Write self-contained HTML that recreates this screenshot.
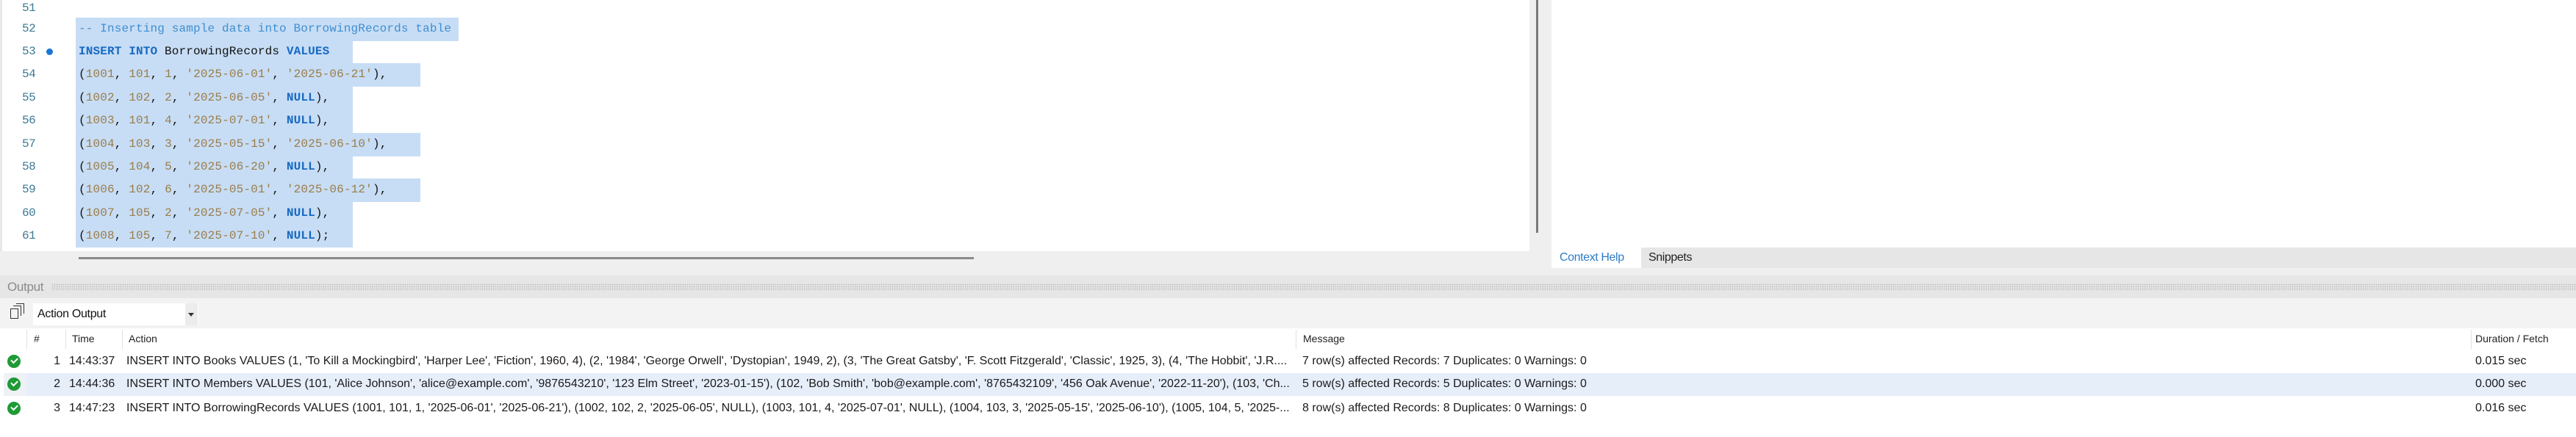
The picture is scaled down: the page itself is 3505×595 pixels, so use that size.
<!DOCTYPE html>
<html><head><meta charset="utf-8"><style>
*{margin:0;padding:0;box-sizing:border-box}
body{width:3505px;height:595px;background:#efefef;position:relative;overflow:hidden;font-family:"Liberation Sans",sans-serif}
.abs{position:absolute}
#ed{left:3px;top:0;width:2078px;height:342px;background:#fff}
.ln{position:absolute;left:30px;width:24px;text-align:left;font:16px "Liberation Mono",monospace;color:#3c7a96;letter-spacing:-0.5px}
.cl{position:absolute;left:103px;height:32px;font:16px "Liberation Mono",monospace;letter-spacing:0.15px;line-height:31px;white-space:pre;background:#c7ddf5;padding-left:4px}
.c{color:#3f8ed0}.k{color:#1769c2;font-weight:bold}.n{color:#9a7c4a}.i{color:#111}
.row{position:absolute;left:0;width:3505px;height:32px;font-size:16px;line-height:32px;color:#1a1a1a;white-space:nowrap;letter-spacing:0}
.row span{position:absolute;overflow:hidden;text-overflow:clip}
.chk{position:absolute;left:10px;top:7px;width:18px;height:18px;border-radius:50%;background:#1f9a35}
.chk:after{content:"";position:absolute;left:5px;top:4px;width:7px;height:4px;border-left:2.5px solid #fff;border-bottom:2.5px solid #fff;transform:rotate(-45deg)}
</style></head><body>
<div id="ed" class="abs"></div>
<div class="abs" style="left:0;top:0;width:3px;height:342px;background:#e8e8e8"></div>
<div class="ln" style="top:0;line-height:22px">51</div>
<div class="ln" style="top:24px;line-height:31px">52</div>
<div class="ln" style="top:55px;line-height:31px">53</div>
<div class="abs" style="left:63px;top:66px;width:9px;height:9px;border-radius:50%;background:#1877d2"></div>
<div class="ln" style="top:86px;line-height:31px">54</div>
<div class="ln" style="top:118px;line-height:31px">55</div>
<div class="ln" style="top:149px;line-height:31px">56</div>
<div class="ln" style="top:181px;line-height:31px">57</div>
<div class="ln" style="top:212px;line-height:31px">58</div>
<div class="ln" style="top:243px;line-height:31px">59</div>
<div class="ln" style="top:275px;line-height:31px">60</div>
<div class="ln" style="top:306px;line-height:31px">61</div>
<div class="cl" style="top:24px;width:521px"><span class="c">-- Inserting sample data into BorrowingRecords table</span></div>
<div class="cl" style="top:55px;width:377px"><span class="k">INSERT INTO</span> <span class="i">BorrowingRecords</span> <span class="k">VALUES</span></div>
<div class="cl" style="top:86px;width:469px"><span class="i">(</span><span class="n">1001</span><span class="i">, </span><span class="n">101</span><span class="i">, </span><span class="n">1</span><span class="i">, </span><span class="n">'2025-06-01'</span><span class="i">, </span><span class="n">'2025-06-21'</span><span class="i">),</span></div>
<div class="cl" style="top:118px;width:377px"><span class="i">(</span><span class="n">1002</span><span class="i">, </span><span class="n">102</span><span class="i">, </span><span class="n">2</span><span class="i">, </span><span class="n">'2025-06-05'</span><span class="i">, </span><span class="k">NULL</span><span class="i">),</span></div>
<div class="cl" style="top:149px;width:377px"><span class="i">(</span><span class="n">1003</span><span class="i">, </span><span class="n">101</span><span class="i">, </span><span class="n">4</span><span class="i">, </span><span class="n">'2025-07-01'</span><span class="i">, </span><span class="k">NULL</span><span class="i">),</span></div>
<div class="cl" style="top:181px;width:469px"><span class="i">(</span><span class="n">1004</span><span class="i">, </span><span class="n">103</span><span class="i">, </span><span class="n">3</span><span class="i">, </span><span class="n">'2025-05-15'</span><span class="i">, </span><span class="n">'2025-06-10'</span><span class="i">),</span></div>
<div class="cl" style="top:212px;width:377px"><span class="i">(</span><span class="n">1005</span><span class="i">, </span><span class="n">104</span><span class="i">, </span><span class="n">5</span><span class="i">, </span><span class="n">'2025-06-20'</span><span class="i">, </span><span class="k">NULL</span><span class="i">),</span></div>
<div class="cl" style="top:243px;width:469px"><span class="i">(</span><span class="n">1006</span><span class="i">, </span><span class="n">102</span><span class="i">, </span><span class="n">6</span><span class="i">, </span><span class="n">'2025-05-01'</span><span class="i">, </span><span class="n">'2025-06-12'</span><span class="i">),</span></div>
<div class="cl" style="top:275px;width:377px"><span class="i">(</span><span class="n">1007</span><span class="i">, </span><span class="n">105</span><span class="i">, </span><span class="n">2</span><span class="i">, </span><span class="n">'2025-07-05'</span><span class="i">, </span><span class="k">NULL</span><span class="i">),</span></div>
<div class="cl" style="top:306px;width:377px;height:31px"><span class="i">(</span><span class="n">1008</span><span class="i">, </span><span class="n">105</span><span class="i">, </span><span class="n">7</span><span class="i">, </span><span class="n">'2025-07-10'</span><span class="i">, </span><span class="k">NULL</span><span class="i">);</span></div>
<div class="abs" style="left:2090px;top:0;width:3px;height:317px;background:#7a7a7a"></div>
<div class="abs" style="left:107px;top:350px;width:1218px;height:3px;background:#8a8a8a"></div>
<div class="abs" style="left:2111px;top:0;width:1394px;height:337px;background:#fff"></div>
<div class="abs" style="left:2111px;top:337px;width:1394px;height:28px;background:#e6e6e6"></div>
<div class="abs" style="left:2111px;top:337px;width:122px;height:28px;background:#fff;color:#2f7bc8;font-size:16px;line-height:28px;padding-left:11px;letter-spacing:-0.4px">Context Help</div>
<div class="abs" style="left:2243px;top:337px;color:#222;font-size:16px;line-height:28px;letter-spacing:-0.4px">Snippets</div>
<div class="abs" style="left:0;top:375px;width:3505px;height:31px;background:#e6e6e6"></div>
<div class="abs" style="left:70px;top:386px;width:3435px;height:10px;background-image:radial-gradient(#c4c4c4 0.8px,transparent 1px);background-size:3px 3px"></div>
<div class="abs" style="left:10px;top:375px;background:#e6e6e6;color:#8a8a8a;font-size:17px;line-height:31px;padding-right:5px;letter-spacing:-0.3px">Output</div>
<div class="abs" style="left:0;top:406px;width:3505px;height:41px;background:#f3f3f4"></div>
<div class="abs" style="left:14px;top:420px;width:11px;height:14px;border:1.5px solid #333;background:#f3f3f4"></div>
<div class="abs" style="left:18px;top:416px;width:11px;height:14px;border-top:1.5px solid #333;border-right:1.5px solid #333"></div>
<div class="abs" style="left:22px;top:413px;width:11px;height:14px;border-top:1.5px solid #333;border-right:1.5px solid #333"></div>
<div class="abs" style="left:45px;top:413px;width:225px;height:30px;background:#fff"></div>
<div class="abs" style="left:252px;top:413px;width:17px;height:30px;background:#ececec"></div>
<div class="abs" style="left:256px;top:426px;width:0;height:0;border-left:4px solid transparent;border-right:4px solid transparent;border-top:5px solid #333"></div>
<div class="abs" style="left:51px;top:413px;font-size:16px;line-height:30px;color:#111;letter-spacing:-0.3px">Action Output</div>
<div class="abs" style="left:0;top:447px;width:3505px;height:148px;background:#fff"></div>
<div class="abs" style="left:36px;top:449px;width:1px;height:26px;background:#e0e0e0"></div>
<div class="abs" style="left:89px;top:449px;width:1px;height:26px;background:#e0e0e0"></div>
<div class="abs" style="left:166px;top:449px;width:1px;height:26px;background:#e0e0e0"></div>
<div class="abs" style="left:1763px;top:449px;width:1px;height:26px;background:#e0e0e0"></div>
<div class="abs" style="left:3362px;top:449px;width:1px;height:26px;background:#e0e0e0"></div>
<div class="row" style="top:445px;font-size:14px;color:#222">
<span style="left:46px">#</span><span style="left:98px">Time</span><span style="left:175px">Action</span><span style="left:1773px">Message</span><span style="left:3368px">Duration / Fetch</span></div>
<div class="row" style="top:476px"><div class="chk"></div>
<span style="left:40px;width:42px;text-align:right">1</span><span style="left:94px">14:43:37</span>
<span style="left:172px;width:1585px">INSERT INTO Books VALUES (1, 'To Kill a Mockingbird', 'Harper Lee', 'Fiction', 1960, 4), (2, '1984', 'George Orwell', 'Dystopian', 1949, 2), (3, 'The Great Gatsby', 'F. Scott Fitzgerald', 'Classic', 1925, 3), (4, 'The Hobbit', 'J.R....</span>
<span style="left:1772px">7 row(s) affected Records: 7  Duplicates: 0  Warnings: 0</span><span style="left:3368px">0.015 sec</span></div>
<div class="abs" style="left:5px;top:508px;width:31px;height:31px;background:#eef1f5"></div>
<div class="abs" style="left:36px;top:508px;width:3469px;height:31px;background:#e6eefa"></div>
<div class="row" style="top:507px"><div class="chk"></div>
<span style="left:40px;width:42px;text-align:right">2</span><span style="left:94px">14:44:36</span>
<span style="left:172px;width:1585px">INSERT INTO Members VALUES (101, 'Alice Johnson', 'alice@example.com', '9876543210', '123 Elm Street', '2023-01-15'), (102, 'Bob Smith', 'bob@example.com', '8765432109', '456 Oak Avenue', '2022-11-20'), (103, 'Ch...</span>
<span style="left:1772px">5 row(s) affected Records: 5  Duplicates: 0  Warnings: 0</span><span style="left:3368px">0.000 sec</span></div>
<div class="row" style="top:540px"><div class="chk"></div>
<span style="left:40px;width:42px;text-align:right">3</span><span style="left:94px">14:47:23</span>
<span style="left:172px;width:1585px">INSERT INTO BorrowingRecords VALUES (1001, 101, 1, '2025-06-01', '2025-06-21'), (1002, 102, 2, '2025-06-05', NULL), (1003, 101, 4, '2025-07-01', NULL), (1004, 103, 3, '2025-05-15', '2025-06-10'), (1005, 104, 5, '2025-...</span>
<span style="left:1772px">8 row(s) affected Records: 8  Duplicates: 0  Warnings: 0</span><span style="left:3368px">0.016 sec</span></div>
</body></html>
